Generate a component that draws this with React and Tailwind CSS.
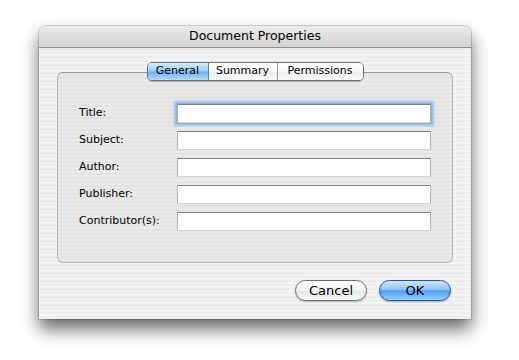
import React from "react";

const fields = ["Title:", "Subject:", "Author:", "Publisher:", "Contributor(s):"];

const App = () => {
  return (
    <div className="w-[519px] h-[360px] bg-white pt-[26px] pl-[39px] font-['DejaVu_Sans',sans-serif] text-black">
      <div className="w-[432px] h-[293px] rounded-t-[7px] shadow-[0_10px_18px_rgba(0,0,0,0.6),0_0_0_1px_rgba(0,0,0,0.15)] flex flex-col overflow-hidden">
        {/* Title bar */}
        <div className="h-[22px] shrink-0 flex items-center justify-center bg-[linear-gradient(to_bottom,#ebebeb,#d3d3d3)] border-b border-[#8c8c8c] text-[12.5px]">
          Document Properties
        </div>

        {/* Body */}
        <div className="flex-1 flex flex-col bg-[repeating-linear-gradient(to_bottom,#ededed_0px,#ededed_2px,#f4f4f4_2px,#f4f4f4_4px)]">
          <div className="flex justify-center mt-[14px] relative z-10">
            <div className="flex h-[19px] rounded-[5px] border border-[#6f6f6f] overflow-hidden text-[11px] shadow-[0_1px_1px_rgba(0,0,0,0.2)]">
              <div className="w-[61px] flex items-center justify-center bg-[linear-gradient(to_bottom,#d6eafc_0%,#9dc9f3_48%,#6cb0ef_52%,#b6ddfd_100%)] border-r border-[#5a7fae]">
                General
              </div>
              <div className="w-[69px] flex items-center justify-center bg-[linear-gradient(to_bottom,#ffffff_0%,#f7f7f7_50%,#ececec_52%,#fbfbfb_100%)] border-r border-[#9a9a9a]">
                Summary
              </div>
              <div className="w-[85px] flex items-center justify-center bg-[linear-gradient(to_bottom,#ffffff_0%,#f7f7f7_50%,#ececec_52%,#fbfbfb_100%)]">
                Permissions
              </div>
            </div>
          </div>

          {/* Group box */}
          <div className="mx-[18px] -mt-[9px] h-[191px] rounded-[6px] border border-[#b4b4b4] border-t-[#9a9a9a] bg-[repeating-linear-gradient(to_bottom,#e3e3e3_0px,#e3e3e3_2px,#e9e9e9_2px,#e9e9e9_4px)] pt-[31px] pl-[21px] flex flex-col gap-[8px]">
            {fields.map((label, i) => (
              <div key={label} className="flex items-center h-[19px]">
                <div className="w-[98px] text-[11px]">{label}</div>
                <div
                  className={`w-[254px] h-[19px] bg-white border border-[#b5b5b5] border-t-[#7e7e7e] border-b-[#d4d4d4] ${
                    i === 0 ? "shadow-[0_0_0_1px_#8ab0dc,0_0_2px_3px_#9cc0e6]" : ""
                  }`}
                />
              </div>
            ))}
          </div>

          {/* Buttons */}
          <div className="flex justify-end gap-[12px] mt-[17px] pr-[20px]">
            <button className="w-[72px] h-[21px] rounded-full border border-[#6e6e6e] text-[13px] leading-none bg-[linear-gradient(to_bottom,#ffffff_0%,#f4f4f4_50%,#e6e6e6_52%,#fafafa_100%)] shadow-[0_1px_2px_rgba(0,0,0,0.25)]">
              Cancel
            </button>
            <button className="w-[72px] h-[21px] rounded-full border border-[#2d4f95] text-[13px] leading-none bg-[linear-gradient(to_bottom,#cfe6fd_0%,#8fc3f6_45%,#4f9ef0_52%,#8fd0ff_100%)] shadow-[0_1px_2px_rgba(0,0,0,0.3)]">
              OK
            </button>
          </div>
        </div>
      </div>
    </div>
  );
};

export default App;
